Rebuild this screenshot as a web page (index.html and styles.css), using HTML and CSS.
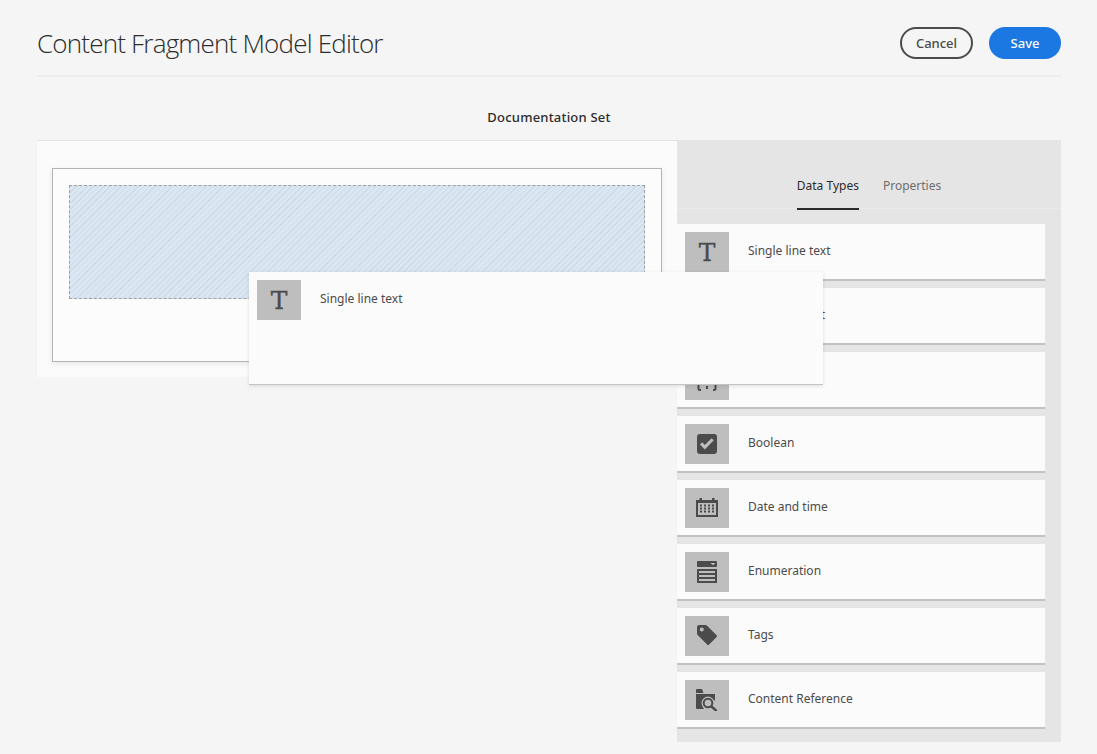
FILE: index.html
```html
<!DOCTYPE html>
<html lang="en">
<head>
    <meta charset="UTF-8">
    <meta name="viewport" content="width=device-width, initial-scale=1.0">
    <title>Content Fragment Model Editor</title>
    <link rel="stylesheet" href="styles.css">
</head>
<body>
    <div class="page">
        <header class="top-bar">
            <h1>Content Fragment Model Editor</h1>
            <div class="actions">
                <button class="btn btn-cancel">Cancel</button>
                <button class="btn btn-save">Save</button>
            </div>
        </header>

        <h2 class="model-name">Documentation Set</h2>

        <div class="editor">
            <section class="canvas">
                <div class="form-box">
                    <div class="drop-zone"></div>
                </div>
            </section>

            <aside class="side">
                <nav class="tabs">
                    <a class="tab active">Data Types</a>
                    <a class="tab">Properties</a>
                </nav>
                <ul class="types">
                    <li class="type">
                        <span class="type-icon glyph">T</span>
                        <span class="type-label">Single line text</span>
                    </li>
                    <li class="type">
                        <span class="type-icon glyph">T</span>
                        <span class="type-label">Multi line text</span>
                    </li>
                    <li class="type">
                        <span class="type-icon">
                            <svg width="22" height="22" viewBox="0 0 22 22"><path fill="none" stroke="#4b4b4b" stroke-width="2" d="M5 1H4a1.500 1.500 0 0 0-1.500 1.500V9L1 11l1.500 2v6.500A1.500 1.500 0 0 0 4 21h1M17 1h1a1.500 1.500 0 0 1 1.500 1.500V9l1.500 2-1.500 2v6.500A1.500 1.500 0 0 1 18 21h-1"/><path fill="#4b4b4b" d="M10 17h2v3h-2zM10 3h2v3h-2z"/></svg>
                        </span>
                        <span class="type-label">Number</span>
                    </li>
                    <li class="type">
                        <span class="type-icon">
                            <svg width="20" height="20" viewBox="0 0 20 20"><path fill="#4b4b4b" fill-rule="evenodd" d="M3 0h14a3 3 0 0 1 3 3v14a3 3 0 0 1-3 3H3a3 3 0 0 1-3-3V3a3 3 0 0 1 3-3zm2.200 8.200L3 10.400l4.800 5L16.800 6.300 14.600 4.200l-6.800 6.900z"/></svg>
                        </span>
                        <span class="type-label">Boolean</span>
                    </li>
                    <li class="type">
                        <span class="type-icon">
                            <svg width="22" height="20" viewBox="0 0 22 20"><path fill="#4b4b4b" fill-rule="evenodd" d="M0 2h3.500V0H6v2h10V0h2.500v2H22v17H0zm2 3v12h18V5z"/><path fill="#4b4b4b" d="M4 6.500h2v2H4zm4 0h2v2H8zm4 0h2v2h-2zm4 0h2v2h-2zM4 9.500h2v2H4zm4 0h2v2H8zm4 0h2v2h-2zm4 0h2v2h-2zM4 12.500h2v2H4zm4 0h2v2H8zm4 0h2v2h-2zm4 0h2v2h-2z"/></svg>
                        </span>
                        <span class="type-label">Date and time</span>
                    </li>
                    <li class="type">
                        <span class="type-icon">
                            <svg width="20" height="22" viewBox="0 0 20 22"><path fill="#4b4b4b" fill-rule="evenodd" d="M1 0h18a1 1 0 0 1 1 1v4a1 1 0 0 1-1 1H1a1 1 0 0 1-1-1V1a1 1 0 0 1 1-1zm12.500 2l2.500 2.200L18.500 2z"/><path fill="#4b4b4b" fill-rule="evenodd" d="M0 8h20v14H0zm2 2v2h16v-2zm0 4v2h16v-2zm0 4v2h16v-2z"/></svg>
                        </span>
                        <span class="type-label">Enumeration</span>
                    </li>
                    <li class="type">
                        <span class="type-icon">
                            <svg width="20" height="22" viewBox="0 0 20 22"><path fill="#4b4b4b" fill-rule="evenodd" d="M2 0h6.500a2 2 0 0 1 1.400.6l9.500 9.500a1.500 1.500 0 0 1 0 2.100l-7.200 7.200a1.500 1.500 0 0 1-2.100 0L.6 9.900A2 2 0 0 1 0 8.500V2a2 2 0 0 1 2-2zm2.800 2.600a2 2 0 1 0 0 4 2 2 0 0 0 0-4z"/></svg>
                        </span>
                        <span class="type-label">Tags</span>
                    </li>
                    <li class="type">
                        <span class="type-icon">
                            <svg width="22" height="22" viewBox="0 0 22 22"><path fill="#4b4b4b" d="M0 1a1 1 0 0 1 1-1h5l1.500 4H0z"/><path fill="#4b4b4b" d="M0 5h19v6.500h-1A6.500 6.500 0 1 0 6.400 17.300L8 20H1a1 1 0 0 1-1-1z"/><circle cx="12" cy="14" r="4.300" fill="none" stroke="#4b4b4b" stroke-width="2"/><path fill="none" stroke="#4b4b4b" stroke-width="2.400" stroke-linecap="round" d="M15.500 17.500l4.500 4"/></svg>
                        </span>
                        <span class="type-label">Content Reference</span>
                    </li>
                </ul>
            </aside>

            <!-- item being dragged -->
            <div class="drag-ghost">
                <span class="type-icon glyph">T</span>
                <span class="type-label">Single line text</span>
            </div>
        </div>
    </div>
</body>
</html>
```

FILE: styles.css
```css
* {
    box-sizing: border-box;
}
body {
    font-family: "Noto Sans", Arial, sans-serif;
    background-color: #f5f5f5;
    color: #4b4b4b;
    margin: 0;
    padding: 0;
}
.page {
    width: 1024px;
    margin-left: 37px;
}

/* Header */
.top-bar {
    display: flex;
    justify-content: space-between;
    align-items: flex-start;
    height: 77px;
    padding-top: 27px;
    border-bottom: 2px solid #ededed;
}
h1 {
    margin: 0;
    font-family: "Open Sans", sans-serif;
    font-size: 26px;
    letter-spacing: -0.8px;
    line-height: 32px;
    font-weight: 300;
    color: #2c2c2c;
}
.actions {
    display: flex;
    gap: 16px;
}
.btn {
    height: 32px;
    border-radius: 16px;
    font-family: "Noto Sans", Arial, sans-serif;
    font-size: 13px;
    font-weight: 500;
    padding: 0;
}
.btn-cancel {
    width: 73px;
    background-color: transparent;
    border: 2px solid #4b4b4b;
    color: #4b4b4b;
}
.btn-save {
    width: 72px;
    background-color: #1b78e2;
    border: none;
    color: #fff;
}
.model-name {
    margin: 0;
    height: 63px;
    padding-top: 31px;
    text-align: center;
    font-size: 13px;
    line-height: 18px;
    font-weight: 500;
    letter-spacing: 0.2px;
    color: #2c2c2c;
}

/* Editor */
.editor {
    position: relative;
    display: flex;
    align-items: flex-start;
}
.canvas {
    width: 640px;
    height: 237px;
    padding: 27px 15px 15px;
    background-color: #fbfbfb;
    border-top: 1px solid #e4e4e4;
}
.form-box {
    height: 194px;
    padding: 16px;
    border: 1px solid #b3b3b3;
    background-color: #fcfcfc;
    box-shadow: 0 2px 6px rgba(0, 0, 0, 0.08);
}
.drop-zone {
    height: 114px;
    border: 1px dashed #a0a0a0;
    background-color: #d9e6f4;
    background-image: repeating-linear-gradient(135deg, #d3d9e0 0, #d3d9e0 1px, transparent 1px, transparent 4px);
}
.side {
    width: 384px;
    height: 602px;
    background-color: #e5e5e5;
}
.tabs {
    display: flex;
    justify-content: center;
    gap: 24px;
    height: 69px;
    padding-top: 37px;
    border-bottom: 1px solid #ebebeb;
    margin-bottom: 15px;
}
.tab {
    height: 33px;
    font-size: 12px;
    line-height: 18px;
    color: #6e6e6e;
}
.tab.active {
    color: #2c2c2c;
    border-bottom: 2px solid #2c2c2c;
}
.types {
    list-style: none;
    margin: 0;
    padding: 0;
    width: 368px;
}
.type {
    display: flex;
    gap: 19px;
    height: 57px;
    margin-bottom: 7px;
    padding: 8px;
    background-color: #fbfbfb;
    border-bottom: 2px solid #c2c2c2;
}
.type-icon {
    display: flex;
    align-items: center;
    justify-content: center;
    flex: none;
    width: 44px;
    height: 40px;
    background-color: #bebebe;
}
.glyph {
    font-family: "DejaVu Serif", serif;
    font-size: 25px;
    color: #4b4b4b;
    -webkit-text-stroke: 0.3px #4b4b4b;
}
.type-label {
    font-size: 12px;
    line-height: 38px;
    color: #4b4b4b;
}
.drag-ghost {
    position: absolute;
    left: 212px;
    top: 132px;
    display: flex;
    gap: 19px;
    width: 574px;
    height: 113px;
    padding: 8px;
    background-color: #fbfbfb;
    border-bottom: 1px solid #c4c4c4;
    box-shadow: 0 1px 4px rgba(0, 0, 0, 0.12);
}
```
